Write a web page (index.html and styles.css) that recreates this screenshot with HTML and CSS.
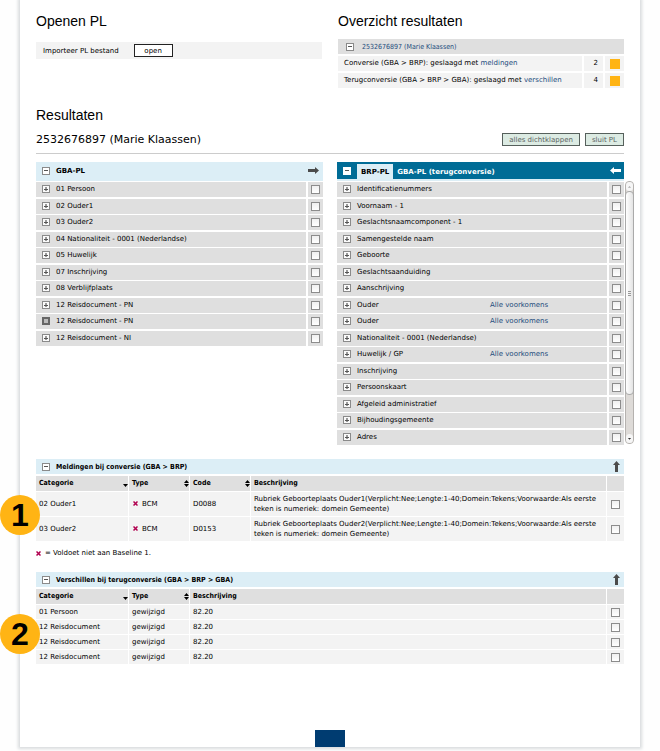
FILE: index.html
```html
<!DOCTYPE html>
<html lang="nl">
<head>
<meta charset="utf-8">
<title>Resultaten</title>
<link rel="stylesheet" href="styles.css">
</head>
<body>
<svg class="defs" aria-hidden="true">
  <symbol id="arrow" viewBox="0 0 11 7"><path d="M0 2h7V0l4 3.500L7 7V5H0z"/></symbol>
  <symbol id="up" viewBox="0 0 7 11"><path d="M2 11V4H0l3.500-4L7 4H5v7z"/></symbol>
  <symbol id="cross" viewBox="0 0 5 5"><path d="M0.500 0.500l4 4M4.500 0.500l-4 4" stroke="#b0004f" stroke-width="1.500"/></symbol>
  <symbol id="down" viewBox="0 0 5 7"><path d="M0 4h5L2.500 7z"/></symbol>
  <symbol id="sort" viewBox="0 0 5 7"><path d="M0 3h5L2.500 0zM0 4h5L2.500 7z"/></symbol>
</svg>
<main class="page">
  <div class="columns top">
    <section>
      <h2>Openen PL</h2>
      <div class="import"><span id="import-label">Importeer PL bestand</span><button type="button" class="open" aria-describedby="import-label">open</button></div>
    </section>
    <section>
      <h2>Overzicht resultaten</h2>
      <div class="overview">
        <div class="overview-head"><button type="button" class="toggle minus" aria-label="Inklappen"></button><a href="#">2532676897 (Marie Klaassen)</a></div>
        <div class="overview-row"><span>Conversie (GBA &gt; BRP): geslaagd met <a href="#meldingen">meldingen</a></span><span class="count">2</span><span class="status"><i></i></span></div>
        <div class="overview-row"><span>Terugconversie (GBA &gt; BRP &gt; GBA): geslaagd met <a href="#verschillen">verschillen</a></span><span class="count">4</span><span class="status"><i></i></span></div>
      </div>
    </section>
  </div>

  <h2>Resultaten</h2>
  <div class="person">
    <h3>2532676897 (Marie Klaassen)</h3>
    <button type="button" class="action">alles dichtklappen</button>
    <button type="button" class="action">sluit PL</button>
  </div>

  <div class="columns lists">
    <section>
      <div class="list-head"><button type="button" class="toggle minus" aria-label="Inklappen"></button><b>GBA-PL</b><svg class="arrow"><use href="#arrow"/></svg></div>
      <ul class="list">
        <li><label for="g1"><button type="button" class="toggle" aria-label="Uitklappen"></button>01 Persoon</label><span class="tick"><input type="checkbox" id="g1"></span></li>
        <li><label for="g2"><button type="button" class="toggle" aria-label="Uitklappen"></button>02 Ouder1</label><span class="tick"><input type="checkbox" id="g2"></span></li>
        <li><label for="g3"><button type="button" class="toggle" aria-label="Uitklappen"></button>03 Ouder2</label><span class="tick"><input type="checkbox" id="g3"></span></li>
        <li><label for="g4"><button type="button" class="toggle" aria-label="Uitklappen"></button>04 Nationaliteit - 0001 (Nederlandse)</label><span class="tick"><input type="checkbox" id="g4"></span></li>
        <li><label for="g5"><button type="button" class="toggle" aria-label="Uitklappen"></button>05 Huwelijk</label><span class="tick"><input type="checkbox" id="g5"></span></li>
        <li><label for="g6"><button type="button" class="toggle" aria-label="Uitklappen"></button>07 Inschrijving</label><span class="tick"><input type="checkbox" id="g6"></span></li>
        <li><label for="g7"><button type="button" class="toggle" aria-label="Uitklappen"></button>08 Verblijfplaats</label><span class="tick"><input type="checkbox" id="g7"></span></li>
        <li><label for="g8"><button type="button" class="toggle" aria-label="Uitklappen"></button>12 Reisdocument - PN</label><span class="tick"><input type="checkbox" id="g8"></span></li>
        <li><label for="g9"><button type="button" class="toggle dark" aria-label="Uitklappen"></button>12 Reisdocument - PN</label><span class="tick"><input type="checkbox" id="g9"></span></li>
        <li><label for="g10"><button type="button" class="toggle" aria-label="Uitklappen"></button>12 Reisdocument - NI</label><span class="tick"><input type="checkbox" id="g10"></span></li>
      </ul>
    </section>
    <section class="brp">
      <div class="list-head blue"><button type="button" class="toggle minus" aria-label="Inklappen"></button><button type="button" class="tab active">BRP-PL</button><button type="button" class="tab">GBA-PL (terugconversie)</button><svg class="arrow left"><use href="#arrow"/></svg></div>
      <ul class="list">
        <li><label for="b1"><button type="button" class="toggle" aria-label="Uitklappen"></button>Identificatienummers</label><span class="tick"><input type="checkbox" id="b1"></span></li>
        <li><label for="b2"><button type="button" class="toggle" aria-label="Uitklappen"></button>Voornaam - 1</label><span class="tick"><input type="checkbox" id="b2"></span></li>
        <li><label for="b3"><button type="button" class="toggle" aria-label="Uitklappen"></button>Geslachtsnaamcomponent - 1</label><span class="tick"><input type="checkbox" id="b3"></span></li>
        <li><label for="b4"><button type="button" class="toggle" aria-label="Uitklappen"></button>Samengestelde naam</label><span class="tick"><input type="checkbox" id="b4"></span></li>
        <li><label for="b5"><button type="button" class="toggle" aria-label="Uitklappen"></button>Geboorte</label><span class="tick"><input type="checkbox" id="b5"></span></li>
        <li><label for="b6"><button type="button" class="toggle" aria-label="Uitklappen"></button>Geslachtsaanduiding</label><span class="tick"><input type="checkbox" id="b6"></span></li>
        <li><label for="b7"><button type="button" class="toggle" aria-label="Uitklappen"></button>Aanschrijving</label><span class="tick"><input type="checkbox" id="b7"></span></li>
        <li><label for="b8"><button type="button" class="toggle" aria-label="Uitklappen"></button>Ouder</label><a href="#">Alle voorkomens</a><span class="tick"><input type="checkbox" id="b8"></span></li>
        <li><label for="b9"><button type="button" class="toggle" aria-label="Uitklappen"></button>Ouder</label><a href="#">Alle voorkomens</a><span class="tick"><input type="checkbox" id="b9"></span></li>
        <li><label for="b10"><button type="button" class="toggle" aria-label="Uitklappen"></button>Nationaliteit - 0001 (Nederlandse)</label><span class="tick"><input type="checkbox" id="b10"></span></li>
        <li><label for="b11"><button type="button" class="toggle" aria-label="Uitklappen"></button>Huwelijk / GP</label><a href="#">Alle voorkomens</a><span class="tick"><input type="checkbox" id="b11"></span></li>
        <li><label for="b12"><button type="button" class="toggle" aria-label="Uitklappen"></button>Inschrijving</label><span class="tick"><input type="checkbox" id="b12"></span></li>
        <li><label for="b13"><button type="button" class="toggle" aria-label="Uitklappen"></button>Persoonskaart</label><span class="tick"><input type="checkbox" id="b13"></span></li>
        <li><label for="b14"><button type="button" class="toggle" aria-label="Uitklappen"></button>Afgeleid administratief</label><span class="tick"><input type="checkbox" id="b14"></span></li>
        <li><label for="b15"><button type="button" class="toggle" aria-label="Uitklappen"></button>Bijhoudingsgemeente</label><span class="tick"><input type="checkbox" id="b15"></span></li>
        <li><label for="b16"><button type="button" class="toggle" aria-label="Uitklappen"></button>Adres</label><span class="tick"><input type="checkbox" id="b16"></span></li>
      </ul>
      <div class="scrollbar" aria-hidden="true">
        <svg viewBox="0 0 9 9"><path d="M2.500 6L4.500 4L6.500 6z" fill="#aaa"/></svg>
        <div class="thumb"></div>
        <svg viewBox="0 0 9 9"><path d="M2.500 4L4.500 6L6.500 4z" fill="#333"/></svg>
      </div>
    </section>
  </div>

  <section class="report" id="meldingen">
    <div class="report-head"><button type="button" class="toggle minus" aria-label="Inklappen"></button><b>Meldingen bij conversie (GBA &gt; BRP)</b><svg class="up"><use href="#up"/></svg></div>
    <table class="messages">
      <colgroup><col class="c-cat"><col class="c-type"><col class="c-code"><col><col class="c-tick"></colgroup>
      <thead><tr><th>Categorie<svg><use href="#down"/></svg></th><th>Type<svg><use href="#sort"/></svg></th><th>Code<svg><use href="#sort"/></svg></th><th>Beschrijving</th><td></td></tr></thead>
      <tbody>
        <tr><td>02 Ouder1</td><td><svg class="cross"><use href="#cross"/></svg>BCM</td><td>D0088</td><td>Rubriek Geboorteplaats Ouder1(Verplicht:Nee;Lengte:1-40;Domein:Tekens;Voorwaarde:Als eerste teken is numeriek: domein Gemeente)</td><td><input type="checkbox" aria-label="02 Ouder1"></td></tr>
        <tr><td>03 Ouder2</td><td><svg class="cross"><use href="#cross"/></svg>BCM</td><td>D0153</td><td>Rubriek Geboorteplaats Ouder2(Verplicht:Nee;Lengte:1-40;Domein:Tekens;Voorwaarde:Als eerste teken is numeriek: domein Gemeente)</td><td><input type="checkbox" aria-label="03 Ouder2"></td></tr>
      </tbody>
    </table>
    <p class="note"><svg class="cross"><use href="#cross"/></svg>= Voldoet niet aan Baseline 1.</p>
    <span class="marker">1</span>
  </section>

  <section class="report" id="verschillen">
    <div class="report-head"><button type="button" class="toggle minus" aria-label="Inklappen"></button><b>Verschillen bij terugconversie (GBA &gt; BRP &gt; GBA)</b><svg class="up"><use href="#up"/></svg></div>
    <table>
      <colgroup><col class="c-cat"><col class="c-type"><col><col class="c-tick"></colgroup>
      <thead><tr><th>Categorie<svg><use href="#down"/></svg></th><th>Type<svg><use href="#sort"/></svg></th><th>Beschrijving</th><td></td></tr></thead>
      <tbody>
        <tr><td>01 Persoon</td><td>gewijzigd</td><td>82.20</td><td><input type="checkbox" aria-label="01 Persoon"></td></tr>
        <tr><td>12 Reisdocument</td><td>gewijzigd</td><td>82.20</td><td><input type="checkbox" aria-label="12 Reisdocument"></td></tr>
        <tr><td>12 Reisdocument</td><td>gewijzigd</td><td>82.20</td><td><input type="checkbox" aria-label="12 Reisdocument"></td></tr>
        <tr><td>12 Reisdocument</td><td>gewijzigd</td><td>82.20</td><td><input type="checkbox" aria-label="12 Reisdocument"></td></tr>
      </tbody>
    </table>
    <span class="marker">2</span>
  </section>
  <footer><div class="block"></div></footer>
</main>
</body>
</html>
```
FILE: styles.css
```css
* { box-sizing: border-box; }

body {
  margin: 0;
  background: #fefefe;
  color: #000;
  font: 7px/10px "DejaVu Sans", sans-serif;
}

.defs { display: none; }
svg { display: block; flex: none; }
a { color: #234c7d; text-decoration: none; }
button { margin: 0; padding: 0; font: inherit; }

.page {
  display: flex;
  flex-direction: column;
  min-height: calc(100vh - 4px);
  margin: 0 20px 4px;
  padding: 0 16px;
  background: #fff;
  box-shadow: 0 0 3px 2px #d9dcde;
}

h2 {
  margin: 0;
  font: 14px/18px "Liberation Sans", sans-serif;
}

h3 {
  flex: 1;
  margin: 0;
  font: 11px/14px "DejaVu Sans", sans-serif;
}

.columns {
  display: grid;
  grid-template-columns: 1fr 1fr;
  gap: 14px;
  align-items: start;
}

.top { gap: 16px; padding: 12px 0 18px; }

.import {
  display: flex;
  align-items: center;
  gap: 15px;
  height: 17px;
  margin-top: 12px;
  padding-left: 7px;
  background: #f3f3f3;
}

.open {
  width: 39px;
  height: 13px;
  border: 1px solid #222;
  background: #fff;
}

.overview {
  display: grid;
  gap: 2px;
  margin-top: 9px;
}

.overview-head {
  display: flex;
  align-items: center;
  gap: 8px;
  height: 15px;
  padding-left: 8px;
  background: #dfdfdf;
  font-family: "DejaVu Sans Condensed", "DejaVu Sans", sans-serif;
}

.overview-row {
  display: grid;
  grid-template-columns: 1fr 19px 19px;
  gap: 2px;
  height: 15px;
  line-height: 15px;
}

.overview-row > span { padding-left: 6px; background: #f3f3f3; }
.overview-row > .count { padding: 0 5px 0 0; text-align: right; }
.overview-row > .status { display: grid; place-items: center; padding: 0; }
.status i { width: 10px; height: 10px; background: #ffb414; }

.person {
  display: flex;
  align-items: center;
  gap: 5px;
  height: 30px;
  padding-top: 2px;
  border-bottom: 1px solid #ccc;
}

.action {
  height: 13px;
  padding: 0 6px;
  border: 1px solid #56605c;
  background: #dcebe3;
  color: #5b625f;
}

.toggle {
  flex: none;
  width: 8px;
  height: 8px;
  border: 1px solid #8a8a8a;
  background:
    linear-gradient(#555, #555) center / 4px 1px no-repeat,
    linear-gradient(#999, #999) center / 2px 4px no-repeat,
    #fafafa;
}

.toggle.minus { background: linear-gradient(#555, #555) center / 4px 1px no-repeat, #fff; }

.toggle.dark {
  border-width: 2px;
  border-color: #666;
  background: #bbb;
}

input[type="checkbox"] {
  appearance: none;
  display: block;
  flex: none;
  width: 9px;
  height: 9px;
  margin: 0;
  border: 1px solid #8c8c8c;
  background: linear-gradient(#f0f0f0, #fff);
}

.lists { padding-top: 8px; }

.list-head {
  display: flex;
  align-items: center;
  height: 19px;
  margin-bottom: 1px;
  padding: 0 4px 2px 6px;
  background: #dceef6;
}

.list-head b { margin-left: 6px; }

.list-head.blue {
  border-bottom: 2px solid #dceef6;
  background: #006c96;
  align-items: stretch;
  padding: 0 3px 0 6px;
}

.blue .toggle, .blue .arrow { align-self: center; }
.blue .toggle { border-color: #fff; }

.tab {
  margin-top: 2px;
  padding: 0 4px;
  border: 0;
  background: none;
  color: #fff;
  font-weight: bold;
  line-height: 14px;
}

.tab.active { margin-left: 6px; background: #dceef6; color: #000; }

.arrow {
  width: 11px;
  height: 7px;
  margin-left: auto;
  fill: #4b4b4b;
}

.arrow.left { fill: #fff; transform: scaleX(-1); }

.list { margin: 0; padding: 0; list-style: none; }

.list li {
  display: flex;
  height: 15px;
  margin-bottom: 1px;
  background: #dfdfdf;
}

.list li:nth-child(odd) { margin-bottom: 2px; }

.list label {
  display: flex;
  flex: 1;
  align-items: center;
  gap: 6px;
  padding: 0 0 1px 6px;
}

.list a { width: 117px; line-height: 14px; }

.tick {
  display: grid;
  place-items: center;
  width: 17px;
  border-left: 2px solid #fff;
}

.brp { position: relative; }

.scrollbar {
  position: absolute;
  top: 19px;
  right: -10px;
  bottom: 2px;
  display: flex;
  flex-direction: column;
  width: 9px;
  border: 1px solid #b5b2af;
  border-radius: 4px;
  background: #dedbd8;
}

.scrollbar svg { height: 9px; background: #f6f6f6; border-radius: 4px; }

.thumb {
  flex: none;
  height: 204px;
  margin: 0 -1px auto;
  border: 1px solid #aaa;
  border-radius: 4px;
  background:
    repeating-linear-gradient(#999 0 1px, transparent 1px 2px) center / 3px 5px no-repeat,
    linear-gradient(90deg, #fff, #e4e4e4);
}

.report { position: relative; }
#meldingen { margin-top: 13px; }
#verschillen { margin-top: 14px; }

.report-head {
  display: flex;
  align-items: center;
  gap: 6px;
  height: 15px;
  padding: 0 4px 0 6px;
  background: #dceef6;
}

.report-head, th { font-family: "DejaVu Sans Condensed", "DejaVu Sans", sans-serif; }

.up {
  width: 7px;
  height: 11px;
  margin-left: auto;
  fill: #4b4b4b;
}

table {
  width: 100%;
  margin-top: 2px;
  border-spacing: 0;
  table-layout: fixed;
}

.c-cat { width: 93px; }
.c-type, .c-code { width: 61px; }
.c-tick { width: 17px; }

th, td {
  height: 15px;
  padding: 0 0 0 3px;
  border-right: 1px solid #fff;
  border-bottom: 1px solid #fff;
  background: #f3f3f3;
  text-align: left;
}

th:last-child, td:last-child { padding-left: 4px; border-right: 0; }
thead th, thead td { height: 16px; padding-bottom: 2px; background: #dfdfdf; }
.messages tbody td { height: 25px; }
th svg { float: right; width: 5px; height: 7px; margin-top: 2px; }
td .cross { display: inline-block; margin: 0 4px 0 1px; }
.cross { width: 5px; height: 5px; }

.note {
  display: flex;
  align-items: center;
  gap: 4px;
  margin: 6px 0 0;
}

.marker {
  position: absolute;
  top: 36px;
  left: -36px;
  width: 40px;
  height: 40px;
  border-radius: 50%;
  background: #ffb414;
  font: bold 32px/40px "Liberation Sans", sans-serif;
  text-align: center;
}

#verschillen .marker { top: 42px; }

footer { margin-top: auto; }

.block {
  width: 30px;
  height: 17px;
  margin: 0 auto;
  background: #003c71;
}
```
